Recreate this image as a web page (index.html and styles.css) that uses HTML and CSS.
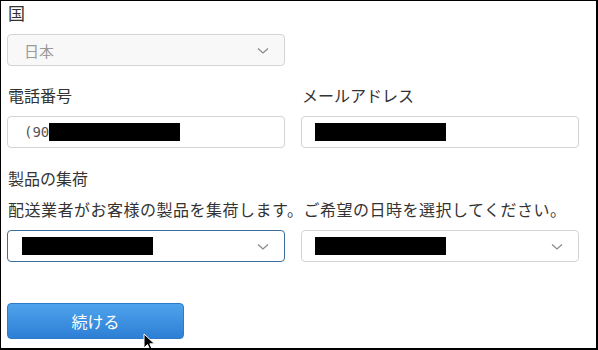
FILE: index.html
```html
<!DOCTYPE html>
<html lang="ja">
<head>
    <meta charset="UTF-8">
    <meta name="viewport" content="width=device-width, initial-scale=1.0">
    <title>配送情報</title>
    <link rel="stylesheet" href="styles.css">
</head>
<body>
    <div class="frame">
        <div class="field">
            <label class="label country">国</label>
            <div class="select disabled">
                <span class="value">日本</span>
                <svg class="chevron" width="12" height="8" viewBox="0 0 12 8"><path d="M1 1.5 L6 6 L11 1.5" fill="none" stroke="#888" stroke-width="1.2"/></svg>
            </div>
        </div>

        <div class="row">
            <div class="field">
                <label class="label">電話番号</label>
                <div class="input">
                    <span class="mono">(90</span><span class="redact phone"></span>
                </div>
            </div>
            <div class="field">
                <label class="label">メールアドレス</label>
                <div class="input">
                    <span class="redact"></span>
                </div>
            </div>
        </div>

        <div class="pickup">
            <label class="label">製品の集荷</label>
            <p class="desc">配送業者がお客様の製品を集荷します。ご希望の日時を選択してください。</p>
            <div class="row tight">
                <div class="select focus">
                    <span class="redact first"></span>
                    <svg class="chevron" width="12" height="8" viewBox="0 0 12 8"><path d="M1 1.5 L6 6 L11 1.5" fill="none" stroke="#888" stroke-width="1.2"/></svg>
                </div>
                <div class="select">
                    <span class="redact"></span>
                    <svg class="chevron" width="12" height="8" viewBox="0 0 12 8"><path d="M1 1.5 L6 6 L11 1.5" fill="none" stroke="#888" stroke-width="1.2"/></svg>
                </div>
            </div>
        </div>

        <div class="actions">
            <button class="btn-primary">続ける</button>
            <svg class="cursor" width="13" height="19" viewBox="0 0 13 19"><path d="M1 1 L1 15 L4.5 11.5 L7 17.5 L9.3 16.5 L6.8 10.8 L11.5 10.8 Z" fill="#000" stroke="#fff" stroke-width="1"/></svg>
        </div>
    </div>
</body>
</html>
```

FILE: styles.css
```css
body {
    margin: 0;
    font-family: "Noto Sans CJK JP", "Noto Sans", sans-serif;
    color: #333;
    background: #fff;
}

.frame {
    width: 598px;
    height: 350px;
    box-sizing: border-box;
    border-top: 1px solid #000;
    border-left: 1px solid #000;
    border-right: 2px solid #000;
    border-bottom: 2px solid #000;
    padding: 2px 0 0 6px;
    overflow: hidden;
}

.label {
    display: block;
    font-size: 16px;
    line-height: 20px;
    height: 20px;
    margin-bottom: 11px;
    padding-left: 1px;
}

.label.country {
    font-size: 17px;
}

.row {
    display: grid;
    grid-template-columns: 278px 278px;
    column-gap: 16px;
    margin-top: 19px;
}

.row.tight {
    margin-top: 0;
}

.select, .input {
    position: relative;
    display: flex;
    align-items: center;
    width: 278px;
    height: 32px;
    box-sizing: border-box;
    border: 1px solid #d4d4d4;
    border-radius: 4px;
    background: #fff;
    padding-left: 16px;
    font-size: 15px;
}

.select.disabled {
    background: #f8f8f8;
    color: #9a9a9a;
}

.select.focus {
    border-color: #3b6e9c;
    padding-left: 14px;
}

.chevron {
    position: absolute;
    right: 15px;
    top: 12px;
}

.mono {
    font-family: "DejaVu Sans Mono", monospace;
    font-size: 14px;
    color: #555;
}

.redact {
    display: inline-block;
    width: 131px;
    height: 18px;
    background: #000;
}

.row .field:last-child .input .redact,
.row.tight .select:last-child .redact {
    margin-left: -3px;
}

.pickup {
    margin-top: 20px;
}

.desc {
    margin: 0 0 11px;
    font-size: 16px;
    line-height: 20px;
    letter-spacing: 0.5px;
    padding-left: 1px;
}

.actions {
    position: relative;
    margin-top: 41px;
}

.btn-primary {
    width: 177px;
    height: 36px;
    border: 1px solid #2f7bc9;
    border-radius: 4px;
    background: linear-gradient(#4fa3ec, #2d7fd5);
    color: #fff;
    font-family: "Noto Sans CJK JP", sans-serif;
    font-size: 16px;
    cursor: pointer;
}

.cursor {
    position: absolute;
    left: 136px;
    top: 30px;
}
```
